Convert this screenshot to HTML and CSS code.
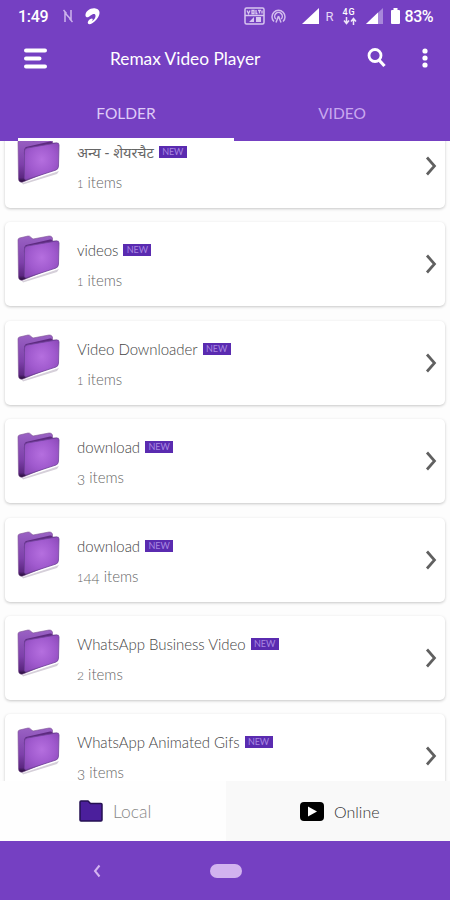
FILE: index.html
```html
<!DOCTYPE html>
<html lang="en">
<head>
    <meta charset="UTF-8">
    <meta name="viewport" content="width=device-width, initial-scale=1.0">
    <title>Remax Video Player</title>
    <link rel="stylesheet" href="styles.css">
</head>
<body>
    <!-- shared icons -->
    <svg class="sprite">
        <defs>
            <radialGradient id="front" cx="0.5" cy="0.45" r="0.75">
                <stop offset="0" stop-color="#b56fdf"/>
                <stop offset="0.5" stop-color="#a05ace"/>
                <stop offset="1" stop-color="#8343b0"/>
            </radialGradient>
            <linearGradient id="back" x1="0" y1="0" x2="0" y2="1">
                <stop offset="0" stop-color="#9a62c4"/>
                <stop offset="0.6" stop-color="#7e40ab"/>
                <stop offset="0.9" stop-color="#5b2780"/>
                <stop offset="1" stop-color="#200a30"/>
            </linearGradient>
        </defs>
        <symbol id="folder" viewBox="0 0 44 48">
            <path d="M3 43L6 46L42 34L40 37L6 47.500Z" fill="#d5cfd9"/>
            <path d="M1 5Q1 3.500 2.500 3L11 1Q13 0.800 14 2.500L16 4L32 1Q34.500 0.500 35.500 3V6L40 6V31L6 45Q2 46 1.500 42Z" fill="url(#back)" stroke="#7d5394" stroke-width="0.600"/>
            <path d="M9 10L33 4.500Q35.500 4 35.500 6L41 6V9L12 14L7 18Q6.500 11 9 10Z" fill="#5e2a80"/>
            <path d="M7.500 14Q7.500 11.500 10 11L39.500 6Q42 5.500 42 8L41.500 29Q41.500 32 39 33L10 42.500Q7.500 43.500 7.500 41Z" fill="url(#front)" stroke="#70439a" stroke-width="0.800"/>
        </symbol>
        <symbol id="chevron" viewBox="0 0 12 20">
            <path d="M2 1.500L9.500 10L2 18.500" fill="none" stroke="#606060" stroke-width="2.700"/>
        </symbol>
    </svg>

    <div class="screen">
        <header class="header">
            <div class="status">
                <span class="time">1:49</span>
                <svg class="n-icon" width="10" height="14" viewBox="0 0 10 14"><path d="M2 13V4L8 10.500V1M0.500 1L3.500 4.500M6.500 9.500L9.500 13" fill="none" stroke="#cdb4ec" stroke-width="1.500"/></svg>
                <svg class="airtel" width="17" height="19" viewBox="0 0 17 19"><path d="M1.500 9C1 4 7 0.500 11.500 1.500C17 2.500 16.500 8 12.500 12.500C9 16.500 5 18.500 4 16.500C3 14.500 6 11.500 8 11.500C9.500 12 8.500 13.500 7.500 14.500C10 13 12 10.500 11.500 8.500C11 6 8.500 7 6.500 8.500C4.500 10.500 2.500 11 1.500 9Z" fill="#fff"/></svg>
                <div class="signals">
                    <svg class="volte" width="21" height="18" viewBox="0 0 21 18">
                        <rect x="1" y="1" width="19" height="16" rx="1.500" fill="none" stroke="#d8c6f0" stroke-width="1.500"/>
                        <path d="M1 8.500H20M3 3.500L4.500 6.500L6 3.500M8 3.500H10V6.500H8ZM12 3V6.500H13.500M14 3.500H17M15.500 3.500V6.500M18 3.500V6.500" fill="none" stroke="#d8c6f0" stroke-width="1.300"/>
                        <path d="M5 15L10 10V15ZM12 10H17V15H12Z" fill="#d8c6f0"/>
                    </svg>
                    <svg class="cast" width="15" height="16" viewBox="0 0 15 16"><path d="M3 13.500A6.500 6.500 0 1 1 12 13.500M4.800 11A3.800 3.800 0 1 1 10.200 11M7.500 8L5 14.500M7.500 8L10 14.500" fill="none" stroke="#d3bdee" stroke-width="1.500"/></svg>
                    <svg class="bars" width="17" height="16" viewBox="0 0 17 16"><path d="M0 16L17 0V16Z" fill="#fff"/></svg>
                    <span class="roam">R</span>
                    <div class="network">
                        <span>4G</span>
                        <svg width="14" height="8" viewBox="0 0 14 8"><path d="M3.500 0V6M1 3.500L3.500 6.500L6 3.500M10.500 8V2M8 4.500L10.500 1.500L13 4.500" fill="none" stroke="#eee6f8" stroke-width="1.500"/></svg>
                    </div>
                    <svg class="bars-two" width="17" height="16" viewBox="0 0 17 16"><path d="M0 16L17 0V16Z" fill="#a888da"/><path d="M0 16L12 4.500V16Z" fill="#fff"/></svg>
                    <svg class="battery" width="9" height="16" viewBox="0 0 9 16"><path d="M2.500 0H6.500V2H8Q9 2 9 3V15Q9 16 8 16H1Q0 16 0 15V3Q0 2 1 2H2.500Z" fill="#fff"/></svg>
                    <span class="percent">83%</span>
                </div>
            </div>

            <div class="toolbar">
                <svg class="menu" width="23" height="21" viewBox="0 0 23 21"><path d="M2 2.500H21M2 10.500H15.500M2 18.500H21" stroke="#fff" stroke-width="4" stroke-linecap="round"/></svg>
                <h1>Remax Video Player</h1>
                <svg class="search" width="19" height="20" viewBox="0 0 19 20"><circle cx="8" cy="7.500" r="6" fill="none" stroke="#fff" stroke-width="2.800"/><path d="M12 12L17.500 18" stroke="#fff" stroke-width="3.200"/></svg>
                <svg class="more" width="6" height="20" viewBox="0 0 6 20"><circle cx="3" cy="3" r="2.600" fill="#fff"/><circle cx="3" cy="10" r="2.600" fill="#fff"/><circle cx="3" cy="17" r="2.600" fill="#fff"/></svg>
            </div>

            <nav class="tabs">
                <div class="tab active"><span>FOLDER</span></div>
                <div class="tab"><span>VIDEO</span></div>
            </nav>
        </header>

        <main class="list">
            <div class="card">
                <svg class="folder"><use href="#folder"/></svg>
                <div class="info">
                    <div class="name"><span class="hindi">अन्य - शेयरचैट</span><span class="badge">NEW</span></div>
                    <div class="count"><span class="short">1</span> items</div>
                </div>
                <svg class="chevron"><use href="#chevron"/></svg>
            </div>
            <div class="card">
                <svg class="folder"><use href="#folder"/></svg>
                <div class="info">
                    <div class="name"><span>videos</span><span class="badge">NEW</span></div>
                    <div class="count"><span class="short">1</span> items</div>
                </div>
                <svg class="chevron"><use href="#chevron"/></svg>
            </div>
            <div class="card">
                <svg class="folder"><use href="#folder"/></svg>
                <div class="info">
                    <div class="name"><span>Video Downloader</span><span class="badge">NEW</span></div>
                    <div class="count"><span class="short">1</span> items</div>
                </div>
                <svg class="chevron"><use href="#chevron"/></svg>
            </div>
            <div class="card">
                <svg class="folder"><use href="#folder"/></svg>
                <div class="info">
                    <div class="name"><span>download</span><span class="badge">NEW</span></div>
                    <div class="count"><span class="low">3</span> items</div>
                </div>
                <svg class="chevron"><use href="#chevron"/></svg>
            </div>
            <div class="card">
                <svg class="folder"><use href="#folder"/></svg>
                <div class="info">
                    <div class="name"><span>download</span><span class="badge">NEW</span></div>
                    <div class="count"><span class="short">1</span><span class="low">44</span> items</div>
                </div>
                <svg class="chevron"><use href="#chevron"/></svg>
            </div>
            <div class="card">
                <svg class="folder"><use href="#folder"/></svg>
                <div class="info">
                    <div class="name"><span>WhatsApp Business Video</span><span class="badge">NEW</span></div>
                    <div class="count"><span class="short wide">2</span> items</div>
                </div>
                <svg class="chevron"><use href="#chevron"/></svg>
            </div>
            <div class="card">
                <svg class="folder"><use href="#folder"/></svg>
                <div class="info">
                    <div class="name"><span>WhatsApp Animated Gifs</span><span class="badge">NEW</span></div>
                    <div class="count"><span class="low">3</span> items</div>
                </div>
                <svg class="chevron"><use href="#chevron"/></svg>
            </div>
        </main>

        <div class="switcher">
            <div class="source local">
                <svg width="24" height="22" viewBox="0 0 24 22"><path d="M1 2Q1 1 2 1H9L11.500 3.500H22Q23 3.500 23 4.500V20Q23 21 22 21H2Q1 21 1 20Z" fill="#4b1f9c" stroke="#251052" stroke-width="1.500"/></svg>
                <span>Local</span>
            </div>
            <div class="source online">
                <svg width="24" height="19" viewBox="0 0 24 19"><rect width="24" height="19" rx="4" fill="#000"/><path d="M8 4.500L17 9.500L8 14.500Z" fill="#fff"/></svg>
                <span>Online</span>
            </div>
        </div>

        <footer class="navbar">
            <svg class="back" width="8" height="14" viewBox="0 0 8 14"><path d="M6.500 1.500L2 7L6.500 12.500" fill="none" stroke="#d3b4f0" stroke-width="2"/></svg>
            <div class="home"></div>
        </footer>
    </div>
</body>
</html>
```

FILE: styles.css
```css
* {
    box-sizing: border-box;
}

body {
    margin: 0;
    font-family: Lato, "Noto Sans", sans-serif;
    background-color: #fdfdfd;
}

svg {
    display: block;
    flex: none;
}

.sprite {
    width: 0;
    height: 0;
    position: absolute;
}

.screen {
    width: 450px;
    height: 900px;
    display: flex;
    flex-direction: column;
    overflow: hidden;
}

.header {
    height: 141px;
    flex: none;
    background-color: #7540c2;
    color: #fff;
}

.status {
    height: 32px;
    padding: 0 17px 0 18px;
    display: flex;
    align-items: center;
    font-family: Roboto, sans-serif;
}

.time {
    width: 31px;
    font-size: 16px;
    font-weight: 500;
    letter-spacing: -0.3px;
}

.n-icon {
    margin-left: 14px;
}

.airtel {
    margin-left: 11px;
}

.signals {
    margin-left: auto;
    display: flex;
    align-items: center;
}

.cast {
    margin-left: 6px;
}

.bars {
    margin-left: 16px;
}

.roam {
    margin-left: 7px;
    font-size: 13px;
    color: #e4d8f4;
}

.network {
    width: 15px;
    margin-left: 9px;
    font-size: 9px;
    line-height: 9px;
    font-weight: 500;
    letter-spacing: 0.8px;
}

.bars-two {
    margin-left: 8px;
}

.battery {
    margin-left: 8px;
}

.percent {
    margin-left: 5px;
    font-size: 16px;
    font-weight: 500;
    letter-spacing: -0.5px;
}

.toolbar {
    height: 52px;
    padding: 0 22px 0 24px;
    display: flex;
    align-items: center;
}

h1 {
    margin: 0 0 0 63px;
    font-size: 17.3px;
    font-weight: 400;
}

.search {
    margin-left: auto;
}

.more {
    margin-left: 36px;
}

.tabs {
    height: 57px;
    padding-left: 18px;
    display: flex;
}

.tab {
    width: 216px;
    padding-top: 19px;
    text-align: center;
    font-size: 15.5px;
    line-height: 20px;
    color: #c9a9ef;
}

.tab.active {
    color: #dfcbf7;
    border-bottom: 3px solid #fff;
}

.list {
    height: 640px;
    flex: none;
    overflow: hidden;
    padding: 0 5px;
}

.card {
    height: 84px;
    margin-bottom: 14.4px;
    padding: 13px 8px 0 12px;
    display: flex;
    background-color: #fff;
    border-radius: 5px;
    box-shadow: 0 1px 3px rgba(0, 0, 0, 0.22);
}

.card:first-child {
    margin-top: -17px;
}

.folder {
    width: 44px;
    height: 48px;
}

.info {
    flex: 1;
    margin-left: 16px;
    padding-top: 4px;
    color: #444;
}

.name {
    height: 22px;
    display: flex;
    align-items: center;
    font-size: 15px;
    font-weight: 300;
    letter-spacing: -0.05px;
    white-space: nowrap;
}

.hindi {
    font-size: 14.5px;
    font-weight: 400;
    color: #666;
}

.badge {
    width: 28px;
    height: 12px;
    margin-left: 5px;
    background-color: #5a2bb0;
    color: #a988e0;
    font-size: 9px;
    font-weight: 400;
    line-height: 12px;
    text-align: center;
}

.count {
    margin-top: 9px;
    font-size: 15px;
    line-height: 20px;
    font-weight: 300;
    color: #666;
}

/* old-style figures */
.short {
    font-size: 11px;
    line-height: 1;
}

.wide {
    font-size: 12px;
}

.low {
    font-size: 14px;
    line-height: 1;
    vertical-align: -2px;
}

.chevron {
    width: 12px;
    height: 20px;
    margin-top: 19px;
}

.switcher {
    height: 60px;
    flex: none;
    display: flex;
}

.source {
    display: flex;
    align-items: center;
    gap: 10px;
    font-weight: 300;
}

.local {
    width: 226px;
    padding-left: 79px;
    background-color: #fefefe;
    color: #888;
    font-size: 17.5px;
}

.online {
    flex: 1;
    padding-left: 74px;
    background-color: #f9f9f9;
    color: #333;
    font-size: 16px;
}

.navbar {
    height: 59px;
    flex: none;
    padding-left: 93px;
    display: flex;
    align-items: center;
    background-color: #7540c2;
}

.home {
    width: 32px;
    height: 14px;
    margin-left: 109px;
    border-radius: 7px;
    background-color: #d2b3ef;
}
```
